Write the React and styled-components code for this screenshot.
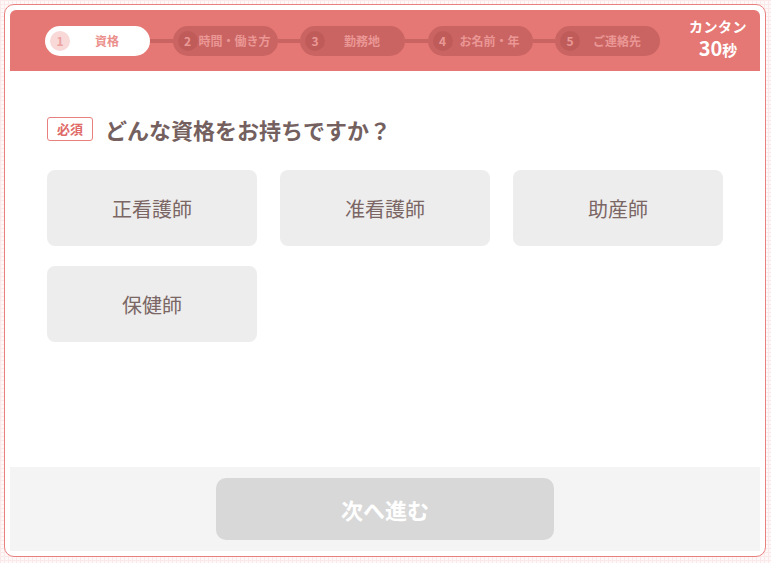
import React from 'react';
import styled, { createGlobalStyle } from 'styled-components';

const GlobalStyle = createGlobalStyle`
  html, body {
    margin: 0;
    padding: 0;
  }
  body {
    font-family: "Noto Sans CJK JP", "Noto Sans", sans-serif;
    background-color: #fff8f8;
    background-image:
      linear-gradient(#fbe9e9 1px, transparent 1px),
      linear-gradient(90deg, #fbe9e9 1px, transparent 1px);
    background-size: 4px 4px;
  }
`;

const Page = styled.div`
  padding: 4px;
  width: 771px;
  height: 563px;
  box-sizing: border-box;
`;

const Card = styled.div`
  height: 553px;
  width: 762px;
  box-sizing: border-box;
  border: 1px solid #e8817e;
  border-radius: 10px;
  background: #fff;
  padding: 5px;
  display: flex;
  flex-direction: column;
`;

const Header = styled.div`
  height: 61px;
  flex: none;
  background: #e57874;
  border-radius: 6px 6px 0 0;
  display: flex;
  align-items: center;
  padding-left: 35px;
`;

const Steps = styled.div`
  display: flex;
  align-items: center;
`;

const Pill = styled.div`
  width: 105px;
  height: 30px;
  box-sizing: border-box;
  border-radius: 15px;
  background: ${p => (p.$active ? '#fff' : '#c96462')};
  display: flex;
  align-items: center;
  padding-left: 5px;
`;

const Num = styled.span`
  width: 20px;
  height: 20px;
  border-radius: 50%;
  background: ${p => (p.$active ? '#f8d9d8' : '#bf5c5a')};
  color: ${p => (p.$active ? '#eba3a1' : '#ea9896')};
  font-size: 12px;
  font-weight: 700;
  display: flex;
  align-items: center;
  justify-content: center;
  flex: none;
`;

const Label = styled.span`
  flex: 1;
  text-align: center;
  font-size: 12px;
  font-weight: 700;
  color: ${p => (p.$active ? '#eb8f8c' : '#eb9795')};
  white-space: nowrap;
  padding-right: 6px;
`;

const Connector = styled.div`
  width: 22.5px;
  height: 4px;
  background: #c96462;
`;

const Quick = styled.div`
  margin-left: auto;
  width: 80px;
  text-align: center;
  color: #fff;
  font-weight: 700;
  margin-right: 2px;
  margin-bottom: 2px;
`;

const QuickTop = styled.div`
  font-size: 14px;
  line-height: 17px;
  letter-spacing: 0.5px;
  margin-bottom: 2px;
`;

const QuickBig = styled.div`
  font-size: 20px;
  line-height: 22px;
  span {
    font-size: 15px;
  }
`;

const Body = styled.div`
  flex: 1;
  padding: 42px 37px 0;
`;

const Question = styled.div`
  display: flex;
  align-items: center;
  gap: 12px;
`;

const Required = styled.span`
  border: 1px solid #e8817e;
  border-radius: 3px;
  color: #e06a67;
  font-size: 13px;
  font-weight: 700;
  padding: 0 9px;
  height: 22px;
  line-height: 22px;
`;

const QText = styled.h2`
  margin: 0;
  font-size: 22px;
  line-height: 32px;
  font-weight: 700;
  color: #74605e;
`;

const Options = styled.div`
  margin-top: 25px;
  display: grid;
  grid-template-columns: repeat(3, 210px);
  column-gap: 23px;
  row-gap: 20px;
`;

const Option = styled.button`
  height: 76px;
  border: none;
  border-radius: 8px;
  background: #eeeded;
  color: #7a6664;
  font-family: inherit;
  font-size: 20px;
  cursor: pointer;
`;

const Footer = styled.div`
  height: 84px;
  flex: none;
  background: #f4f4f4;
  display: flex;
  justify-content: center;
  padding-top: 11px;
  box-sizing: border-box;
`;

const NextButton = styled.button`
  width: 338px;
  height: 62px;
  border: none;
  border-radius: 10px;
  background: #d8d8d8;
  color: #fff;
  font-family: inherit;
  font-size: 22px;
  font-weight: 700;
`;

const steps = ['資格', '時間・働き方', '勤務地', 'お名前・年', 'ご連絡先'];
const options = ['正看護師', '准看護師', '助産師', '保健師'];

export default function App() {
  return (
    <>
      <GlobalStyle />
      <Page>
        <Card>
          <Header>
            <Steps>
              {steps.map((s, i) => (
                <React.Fragment key={s}>
                  {i > 0 && <Connector />}
                  <Pill $active={i === 0}>
                    <Num $active={i === 0}>{i + 1}</Num>
                    <Label $active={i === 0}>{s}</Label>
                  </Pill>
                </React.Fragment>
              ))}
            </Steps>
            <Quick>
              <QuickTop>カンタン</QuickTop>
              <QuickBig>30<span>秒</span></QuickBig>
            </Quick>
          </Header>
          <Body>
            <Question>
              <Required>必須</Required>
              <QText>どんな資格をお持ちですか？</QText>
            </Question>
            <Options>
              {options.map(o => (
                <Option key={o}>{o}</Option>
              ))}
            </Options>
          </Body>
          <Footer>
            <NextButton disabled>次へ進む</NextButton>
          </Footer>
        </Card>
      </Page>
    </>
  );
}
